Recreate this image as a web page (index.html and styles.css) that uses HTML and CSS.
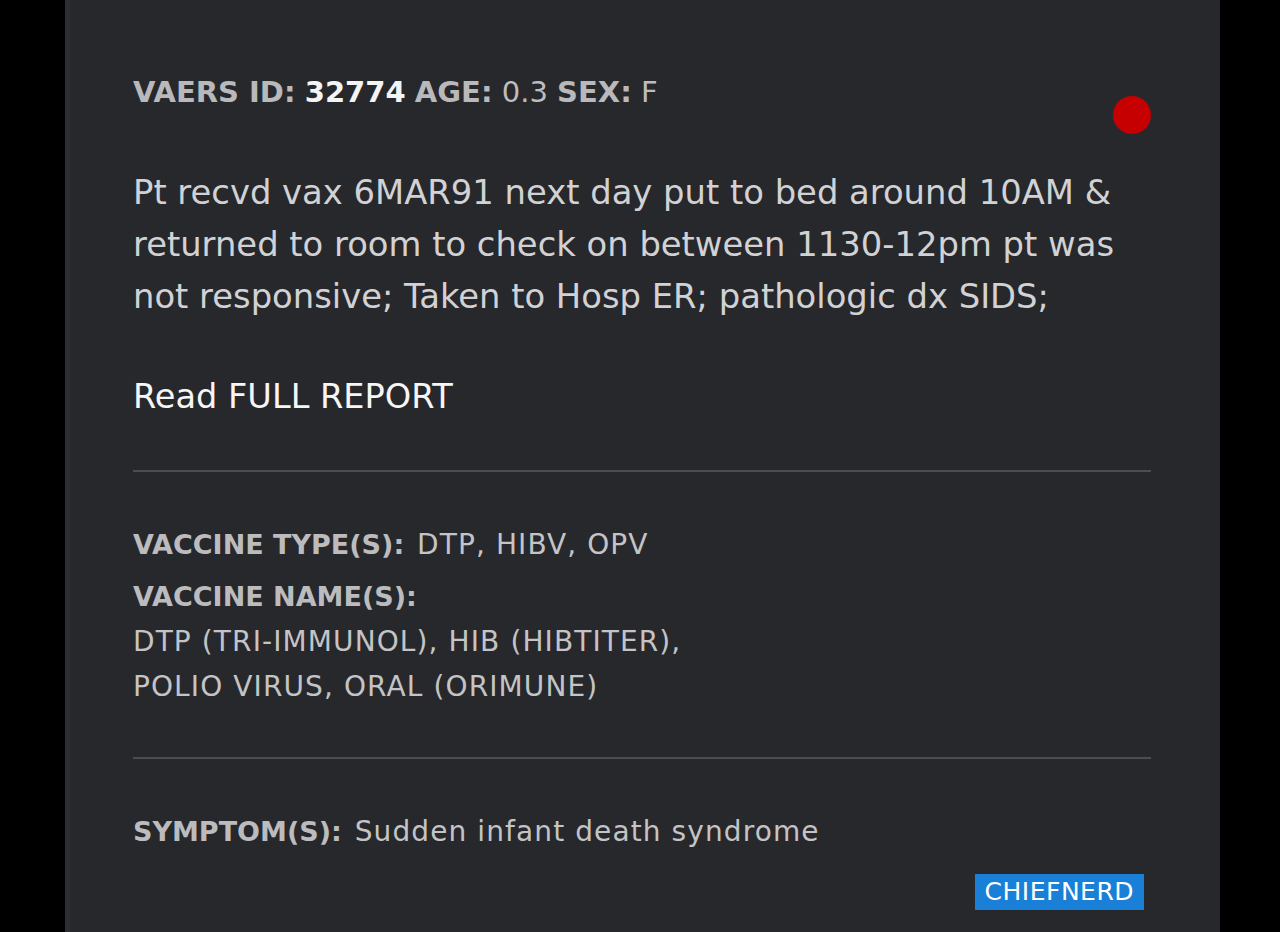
FILE: index.html
```html
<!DOCTYPE html>
<html lang="en">
<head>
<meta charset="utf-8">
<title>VAERS ID 32774</title>
<link rel="stylesheet" href="styles.css">
</head>
<body>
<main class="card">
  <span class="dot"></span>
  <h1 class="head"><b>VAERS ID:</b> <strong>32774</strong> <b>AGE:</b> 0.3 <b>SEX:</b> F</h1>
  <p class="desc">Pt recvd vax 6MAR91 next day put to bed around 10AM &amp;<br>returned to room to check on between 1130-12pm pt was<br>not responsive; Taken to Hosp ER; pathologic dx SIDS;</p>
  <p class="read">Read FULL REPORT</p>
  <hr class="rule">
  <section class="info">
    <p class="row"><b class="lbl">VACCINE TYPE(S):</b> <span class="val">DTP, HIBV, OPV</span></p>
    <p class="row"><b class="lbl">VACCINE NAME(S):</b></p>
    <p class="names">DTP (TRI-IMMUNOL), HIB (HIBTITER),<br>POLIO VIRUS, ORAL (ORIMUNE)</p>
  </section>
  <hr class="rule">
  <p class="row sym"><b class="lbl">SYMPTOM(S):</b> <span class="val">Sudden infant death syndrome</span></p>
  <div class="foot"><span class="badge">CHIEFNERD</span></div>
</main>
</body>
</html>
```

FILE: styles.css
```css
html, body {
  margin: 0;
  padding: 0;
  background: #000;
  height: 100%;
  overflow: hidden;
}
body {
  font-family: "DejaVu Sans", "Noto Sans", sans-serif;
  color: #c4c4c6;
}
.card {
  position: relative;
  box-sizing: border-box;
  margin-left: 65px;
  width: 1155px;
  height: 932px;
  background: #27282c;
  border-left: 5px solid #2d2e32;
  padding: 72px 69px 0 63px;
}
.dot {
  position: absolute;
  left: 1043px;
  top: 96px;
  width: 38px;
  height: 38px;
  border-radius: 50%;
  background: #c60000;
}
.head {
  margin: 0;
  font-size: 29px;
  line-height: 40px;
  font-weight: 400;
  color: #bdbdbf;
}
.head b { font-weight: 700; color: #b9b9bb; }
.head strong { font-weight: 700; color: #f4f4f4; }
.desc {
  margin: 55px 0 0;
  font-size: 33.8px;
  line-height: 52px;
  color: #d2d2d4;
}
.read {
  margin: 48px 0 0;
  font-size: 33.6px;
  line-height: 52px;
  color: #f6f6f6;
}
.rule {
  margin: 47px 0 0;
  border: 0;
  height: 2px;
  background: #4c4d51;
}
.info { margin-top: 53px; }
.row {
  margin: 0;
  font-size: 28px;
  line-height: 40px;
}
.row + .row { margin-top: 12px; }
.lbl { font-weight: 700; font-size: 27px; color: #bcbcbe; margin-right: 4px; }
.val { color: #c4c4c6; letter-spacing: 1.1px; }
.names {
  margin: 2px 0 0;
  font-size: 28px;
  line-height: 45px;
  letter-spacing: 1.1px;
  color: #c4c4c6;
}
.info + .rule { margin-top: 48px; }
.sym { margin-top: 53px; }
.foot {
  display: flex;
  justify-content: flex-end;
  margin: 22px 7px 0 0;
}
.badge {
  display: block;
  height: 36px;
  line-height: 36px;
  padding: 0 10px;
  background: #1a7fd6;
  color: #fff;
  font-size: 25px;
  letter-spacing: 0.5px;
}
```
